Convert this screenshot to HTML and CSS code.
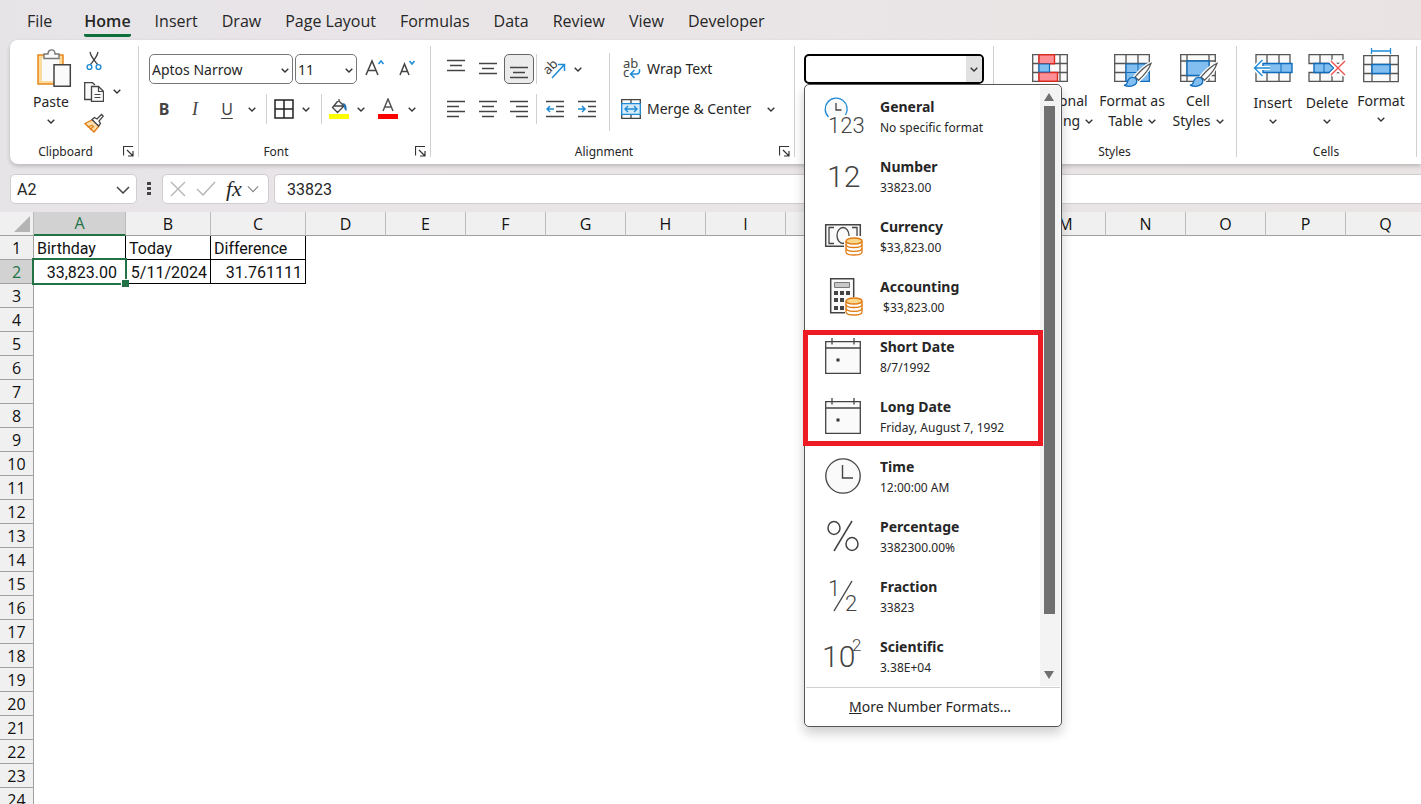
FILE: index.html
```html
<!DOCTYPE html>
<html lang="en">
<head>
<meta charset="utf-8">
<title>Workbook</title>
<link rel="stylesheet" href="styles.css">
</head>
<body>
<svg class="defs" aria-hidden="true">
  <symbol id="chev" viewBox="0 0 8 5"><path d="M.7.8 4 4 7.300.8" fill="none" stroke="#333" stroke-width="1.4"/></symbol>
  <symbol id="launch" viewBox="0 0 11 11"><path d="M.5 9.500V.5H10M4 4l5.500 5.500M10 5v5H5" fill="none" stroke="#333" stroke-width="1.200"/></symbol>
  <symbol id="coins" viewBox="0 0 18 19"><path d="M1 4v11c0 4 16 4 16 0V4" fill="#fff" stroke="#e07a10" stroke-width="1.300"/><path d="M1 7.500c0 4 16 4 16 0M1 11.300c0 4 16 4 16 0" fill="none" stroke="#e07a10" stroke-width="1.300"/><ellipse cx="9" cy="4" rx="8" ry="3" fill="#fbd78c" stroke="#e07a10" stroke-width="1.300"/></symbol>
  <symbol id="cal" viewBox="0 0 36 36"><path d="M.7 3.700h34.600v31.600H.7z" fill="#fafafa" stroke="#444" stroke-width="1.300"/><path d="M.7 10h34.600M7 0v6.500M29 0v6.500" stroke="#444" stroke-width="1.300"/><path d="M11.500 20.500h3v3h-3z" fill="#333"/></symbol>
  <symbol id="brush" viewBox="0 0 30 26"><path d="M29 1C22 4 16 11 12.500 15l3.500 3.500C21 14 27 7 29 1z" fill="#fafafa" stroke="#fff" stroke-width="4"/><path d="M29 1C22 4 16 11 12.500 15l3.500 3.500C21 14 27 7 29 1z" fill="#fafafa" stroke="#555" stroke-width="1.300"/><path d="M1 23.500c4 0 3-3 4.500-5.500 2-3.500 7.500-3 8.500 0 1.500 5-6 8.500-13 5.500z" fill="#83bef0" stroke="#0f6cbd" stroke-width="1.300"/></symbol>
</svg>

<header class="top">
<nav class="tabs" aria-label="Ribbon tabs">
  <button class="tab">File</button><button class="tab active">Home</button><button class="tab">Insert</button><button class="tab">Draw</button><button class="tab">Page Layout</button><button class="tab">Formulas</button><button class="tab">Data</button><button class="tab">Review</button><button class="tab">View</button><button class="tab">Developer</button>
</nav>

<section class="ribbon" aria-label="Home">
  <div class="group clipboard">
    <div class="body">
      <button class="paste">
        <svg width="36" height="40" viewBox="0 0 36 40"><path d="M2 7h25v29H2z" fill="#fbdb9b" stroke="#e8851c" stroke-width="1.500"/><path d="M6 10h17v23H6z" fill="#fafafa"/><path d="M8 10.500V6h4c0-5.500 7-5.500 7 0h4v4.500z" fill="#fafafa" stroke="#777" stroke-width="1.400"/><path d="M18 16.700h16.300v21.600H18z" fill="#fafafa" stroke="#444" stroke-width="1.500"/></svg>
        <span>Paste</span><svg class="chev"><use href="#chev"/></svg>
      </button>
      <div class="cliptools">
        <button aria-label="Cut"><svg width="20" height="20" viewBox="0 0 20 20"><path d="M6 1c1 5 4 8 7.500 12.500M14 1c-1 5-4 8-7.500 12.500" fill="none" stroke="#444" stroke-width="1.300"/><circle cx="5.500" cy="16" r="2.400" fill="none" stroke="#1e8bd6" stroke-width="1.400"/><circle cx="14.500" cy="16" r="2.400" fill="none" stroke="#1e8bd6" stroke-width="1.400"/></svg></button>
        <button aria-label="Copy"><svg width="20" height="20" viewBox="0 0 20 20"><path d="M7 17.500H.7V.7h7.800L11 3" fill="#fafafa" stroke="#444" stroke-width="1.300"/><path d="M7.500 4.500h7l5 5v9.800h-12z" fill="#fafafa" stroke="#444" stroke-width="1.300"/><path d="M14.500 4.500v5h5M10.500 12.500h6M10.500 15.500h6" fill="none" stroke="#444" stroke-width="1.200"/></svg><svg class="chev"><use href="#chev"/></svg></button>
        <button aria-label="Format Painter"><svg width="20" height="20" viewBox="0 0 20 20"><path d="M1 10.500 9 6.500l6 6.500-5 6z" fill="#fde0ac" stroke="#e07a10" stroke-width="1.300"/><path d="M3.500 14 9 12M6 16.500l4-3.500" stroke="#e07a10" stroke-width="1.200"/><path d="m8 6.500 2.500-2 2.500 1.500L17.500 1.500l1.700 1.700L15 8l1.500 2.500-2 2.500z" fill="#fff" stroke="#444" stroke-width="1.300"/></svg></button>
      </div>
    </div>
    <footer><span>Clipboard</span><button class="launcher" aria-label="Clipboard settings"><svg><use href="#launch"/></svg></button></footer>
  </div>

  <div class="group font">
    <div class="body rows">
      <div class="row">
        <label class="pick family"><select aria-label="Font"><option>Aptos Narrow</option></select><svg class="chev"><use href="#chev"/></svg></label>
        <label class="pick size"><select aria-label="Font size"><option>11</option></select><svg class="chev"><use href="#chev"/></svg></label>
        <button class="w32" aria-label="Increase font size"><svg width="20" height="20" viewBox="0 0 20 20"><path d="M1 16 7 2l6 14M3 11.500h8" fill="none" stroke="#444" stroke-width="1.500"/><path d="m13.500 5 2.500-3 2.500 3" fill="none" stroke="#1e8bd6" stroke-width="1.500"/></svg></button>
        <button class="w32" aria-label="Decrease font size"><svg width="20" height="20" viewBox="0 0 20 20"><path d="m3 16 4.500-11L12 16M4.500 12.500h6" fill="none" stroke="#444" stroke-width="1.500"/><path d="m12.500 2 2.500 3 2.500-3" fill="none" stroke="#1e8bd6" stroke-width="1.500"/></svg></button>
      </div>
      <div class="row">
        <button class="w30 glyph bold">B</button><button class="w32 glyph italic">I</button><button class="w32 glyph under">U</button><button class="w18" aria-label="Underline options"><svg class="chev"><use href="#chev"/></svg></button>
        <i class="sep"></i>
        <button class="w24" aria-label="Borders"><svg width="20" height="20" viewBox="0 0 20 20"><path d="M1 1h18v18H1zM10 1v18M1 10h18" fill="none" stroke="#222" stroke-width="1.500"/></svg></button><button class="w20" aria-label="Border options"><svg class="chev"><use href="#chev"/></svg></button>
        <i class="sep"></i>
        <button class="w24" aria-label="Fill color"><svg width="20" height="22" viewBox="0 0 20 22"><path d="M8.500 3.500 3.500 9.500l5 5L15 8 10 3zM10 3V1M15 8H5" fill="#fafafa" stroke="#444" stroke-width="1.300"/><path d="M13 5c4 0 5 3 4.500 8-2-.5-2.500-3-2.500-5z" fill="#1e73b8"/><path d="M0 16h20v5H0z" fill="#ff0"/></svg></button><button class="w20" aria-label="Fill options"><svg class="chev"><use href="#chev"/></svg></button>
        <button class="w34" aria-label="Font color"><svg width="20" height="22" viewBox="0 0 20 22"><path d="M5 13 10 1l5 12M7 9h6" fill="none" stroke="#555" stroke-width="1.500"/><path d="M0 16h20v5H0z" fill="red"/></svg></button><button class="w14" aria-label="Font color options"><svg class="chev"><use href="#chev"/></svg></button>
      </div>
    </div>
    <footer><span>Font</span><button class="launcher" aria-label="Font settings"><svg><use href="#launch"/></svg></button></footer>
  </div>

  <div class="group alignment">
    <div class="body">
      <div class="rows">
        <div class="row">
          <button class="w32" aria-label="Top align"><svg width="18" height="20"><path d="M0 1.500h18M3 6.500h12M0 11.500h18" class="ln"/></svg></button><button class="w32" aria-label="Middle align"><svg width="18" height="20"><path d="M0 4.500h18M3 9.500h12M0 14.500h18" class="ln"/></svg></button><button class="w30 on" aria-label="Bottom align" aria-pressed="true"><svg width="18" height="20"><path d="M0 8.500h18M3 13.500h12M0 18.500h18" class="ln"/></svg></button><i class="sep tight"></i>
          <button class="w32" aria-label="Orientation"><svg width="22" height="22" viewBox="0 0 22 22"><text x="0" y="14" transform="rotate(-45 6 11)" class="abc">ab</text><path d="M8 20 20 7M14 6.500h6.500V13" fill="none" stroke="#1e8bd6" stroke-width="1.500"/></svg></button><button class="w14" aria-label="Orientation options"><svg class="chev"><use href="#chev"/></svg></button>
        </div>
        <div class="row">
          <button class="w32" aria-label="Align left"><svg width="18" height="18"><path d="M0 1.500h18M0 6.500h12M0 11.500h18M0 16.500h12" class="ln"/></svg></button><button class="w32" aria-label="Center"><svg width="18" height="18"><path d="M0 1.500h18M3 6.500h12M0 11.500h18M3 16.500h12" class="ln"/></svg></button><button class="w30" aria-label="Align right"><svg width="18" height="18"><path d="M0 1.500h18M6 6.500h12M0 11.500h18M6 16.500h12" class="ln"/></svg></button><i class="sep tight"></i>
          <button class="w32" aria-label="Decrease indent"><svg width="18" height="18"><path d="M0 1.500h18M10 6.500h8M10 11.500h8M0 16.500h18" class="ln"/><path d="M8 9H1M4 6 1 9l3 3" fill="none" stroke="#1e8bd6" stroke-width="1.500"/></svg></button><button class="w32" aria-label="Increase indent"><svg width="18" height="18"><path d="M0 1.500h18M10 6.500h8M10 11.500h8M0 16.500h18" class="ln"/><path d="M0 9h7M4 6l3 3-3 3" fill="none" stroke="#1e8bd6" stroke-width="1.500"/></svg></button>
        </div>
      </div>
      <i class="sep tall"></i>
      <div class="rows wide">
        <div class="row"><button class="txt"><svg width="20" height="22" viewBox="0 0 20 22"><text x="2" y="10" class="abc">ab</text><text x="2" y="19" class="abc">c</text><path d="M18.500 11c.5 4-1 5-3 5H10M13.500 12l-4 4 4 4" fill="none" stroke="#1e8bd6" stroke-width="1.500"/></svg><span>Wrap Text</span></button></div>
        <div class="row"><button class="txt"><svg width="20" height="20" viewBox="0 0 20 20"><path d="M.7.7h18.600v18.600H.7zM10 .7V5M10 15v4" fill="#fafafa" stroke="#444" stroke-width="1.300"/><path d="M.7 4.700h18.600v10.600H.7z" fill="#d6ebfa" stroke="#1e8bd6" stroke-width="1.300"/><path d="M4 10h12M7 7l-3 3 3 3M13 7l3 3-3 3" fill="none" stroke="#1e8bd6" stroke-width="1.400"/></svg><span>Merge &amp; Center</span></button><button class="w40" aria-label="Merge options"><svg class="chev"><use href="#chev"/></svg></button></div>
      </div>
    </div>
    <footer><span>Alignment</span><button class="launcher" aria-label="Alignment settings"><svg><use href="#launch"/></svg></button></footer>
  </div>

  <div class="group number">
    <div class="combo">
      <input aria-label="Number format" type="text"><button aria-label="Open number formats"><svg class="chev"><use href="#chev"/></svg></button>
      <div class="menu">
        <div class="scroller">
          <div class="items">
            <button class="item"><svg viewBox="0 0 36 36"><path d="M3.500 19A11 11 0 1 1 20.500 17" fill="#fafafa" stroke="#1e8bd6" stroke-width="1.300"/><path d="M11 5v7h5.500" fill="none" stroke="#444" stroke-width="1.300"/><text x="3" y="35" class="num s22">123</text></svg><span><b>General</b><small>No specific format</small></span></button>
            <button class="item"><svg viewBox="0 0 36 36"><text x="2" y="29" class="num s30">12</text></svg><span><b>Number</b><small>33823.00</small></span></button>
            <button class="item"><svg viewBox="0 0 36 36"><path d="M.7 6.700h34.600v21.600H.7z" fill="#fafafa" stroke="#444" stroke-width="1.500"/><path d="M9 9.500H4v16h5M27 9.500h5v16h-5" fill="none" stroke="#444" stroke-width="1.300"/><ellipse cx="18" cy="17.500" rx="6" ry="8" fill="#fafafa" stroke="#444" stroke-width="1.300"/><path d="M19 18h19v19H19z" fill="#fff"/><use href="#coins" x="20" y="19" width="18" height="19"/></svg><span><b>Currency</b><small>$33,823.00</small></span></button>
            <button class="item"><svg viewBox="0 0 36 36"><path d="M5.700.7h23v34h-23z" fill="#fafafa" stroke="#444" stroke-width="1.500"/><path d="M9.500 4.500h15v5h-15z" fill="#c8c8c8" stroke="#777"/><path d="M9 13h4v4H9zM15 13h4v4h-4zM21 13h4v4h-4zM9 20h4v4H9zM15 20h4v4h-4zM9 28h4v4H9zM15 28h4v4h-4z" fill="#444"/><path d="M20 19h18v18H20z" fill="#fff"/><use href="#coins" x="20" y="19" width="18" height="19"/></svg><span><b>Accounting</b><small>&nbsp;$33,823.00</small></span></button>
            <div class="dates">
              <button class="item"><svg><use href="#cal"/></svg><span><b>Short Date</b><small>8/7/1992</small></span></button>
              <button class="item"><svg><use href="#cal"/></svg><span><b>Long Date</b><small>Friday, August 7, 1992</small></span></button>
            </div>
            <button class="item"><svg viewBox="0 0 36 36"><circle cx="18" cy="18" r="17.200" fill="#fafafa" stroke="#444" stroke-width="1.300"/><path d="M17.500 7v13H28" fill="none" stroke="#444" stroke-width="1.400"/></svg><span><b>Time</b><small>12:00:00 AM</small></span></button>
            <button class="item"><svg viewBox="0 0 36 36"><path d="M27 3 9 33" stroke="#444" stroke-width="1.500"/><ellipse cx="9" cy="10" rx="6" ry="6.500" fill="none" stroke="#444" stroke-width="1.500"/><ellipse cx="27" cy="26" rx="6" ry="6.500" fill="none" stroke="#444" stroke-width="1.500"/></svg><span><b>Percentage</b><small>3382300.00%</small></span></button>
            <button class="item"><svg viewBox="0 0 36 36"><text x="3" y="18" class="num s22">1</text><path d="M27 3 9 33" stroke="#444" stroke-width="1.400"/><text x="20" y="33" class="num s22">2</text></svg><span><b>Fraction</b><small>33823</small></span></button>
            <button class="item"><svg viewBox="0 0 36 36"><text x="-3" y="29" class="num s30">10</text><text x="27" y="13" class="num s17">2</text></svg><span><b>Scientific</b><small>3.38E+04</small></span></button>
          </div>
          <div class="bar"><svg width="12" height="10"><path d="m6 1 5 8H1z"/></svg><div class="thumb"></div><svg width="12" height="10"><path d="M6 9 1 1h10z"/></svg></div>
        </div>
        <button class="more"><span><u>M</u>ore Number Formats...</span></button>
      </div>
    </div>
  </div>

  <div class="group styles">
    <div class="body">
      <button class="big cond"><svg width="36" height="34" viewBox="0 0 36 34"><path d="M.7 3.700h34.600v26.600H.7zM.7 12.500h34.600M.7 21.500h34.600M7 4v26M28 4v26" fill="#fafafa" stroke="#555" stroke-width="1.300"/><path d="M7 3.700h15.500v9H7zM7 21.500h18.500v8.800H7z" fill="#ff8f94" stroke="#d92b20" stroke-width="1.400"/><path d="M7 13h10.500v8H7z" fill="#83bef0" stroke="#0f6cbd" stroke-width="1.200"/></svg><span>Conditional</span><span>Formatting <svg class="chev"><use href="#chev"/></svg></span></button>
      <button class="big astable"><svg width="36" height="34" viewBox="0 0 36 34"><path d="M.7 3.700h34.600v26.600H.7zM.7 12.500h34.600M.7 21.500h34.600M12 4v26M24 4v26" fill="#fafafa" stroke="#555" stroke-width="1.300"/><path d="M12 13h23.300v17.300H12z" fill="#83bef0" stroke="#0f6cbd" stroke-width="1.200"/><path d="M12 21.500h23M24 13v17" stroke="#0f6cbd"/><use href="#brush" x="9" y="11" width="29" height="26"/></svg><span>Format as</span><span>Table <svg class="chev"><use href="#chev"/></svg></span></button>
      <button class="big cellst"><svg width="36" height="34" viewBox="0 0 36 34"><path d="M.7 3.700h34.600v26.600H.7zM.7 10h34.600M7 4v26M29 4v26M.7 24.500h34.600" fill="#fafafa" stroke="#555" stroke-width="1.300"/><path d="M7 10h22v14.500H7z" fill="#83bef0" stroke="#0f6cbd" stroke-width="1.300"/><use href="#brush" x="9" y="11" width="29" height="26"/></svg><span>Cell</span><span>Styles <svg class="chev"><use href="#chev"/></svg></span></button>
    </div>
    <footer><span>Styles</span></footer>
  </div>

  <div class="group cells">
    <div class="body">
      <button class="big"><svg width="40" height="34" viewBox="0 0 40 34"><path d="M3 3.700h34v26.600H3zM14 4v26M26 4v26" fill="#fafafa" stroke="#555" stroke-width="1.300"/><path d="M10 12.500h29v9H10z" fill="#83bef0" stroke="#0f6cbd" stroke-width="1.400"/><path d="M28 13v8" stroke="#0f6cbd"/><path d="M17 17H1M9.500 8.500 1 17l8.500 8.500" fill="none" stroke="#fff" stroke-width="4"/><path d="M17 17H1.500M9.500 9 1.500 17l8 8" fill="none" stroke="#1e8bd6" stroke-width="1.400"/></svg><span>Insert</span><svg class="chev"><use href="#chev"/></svg></button>
      <button class="big"><svg width="38" height="34" viewBox="0 0 38 34"><path d="M1 3.700h34v8.800H1zM1 21.500h34v8.800H1zM12 4v8M24 4v8M12 22v8M24 22v8" fill="#fafafa" stroke="#555" stroke-width="1.300"/><path d="M6 12.500h15l5 4.500-5 4.500H6z" fill="#83bef0" stroke="#0f6cbd" stroke-width="1.400"/><path d="M16 13v8" stroke="#0f6cbd"/><path d="m23 10 14 14M37 10 23 24" stroke="#fff" stroke-width="5"/><path d="m23 10 14 14M37 10 23 24" stroke="#f0504e" stroke-width="1.400"/></svg><span>Delete</span><svg class="chev"><use href="#chev"/></svg></button>
      <button class="big"><svg class="fmt" width="36" height="36" viewBox="0 0 36 36"><path d="M.7 8.700h34.600v26H.7zM.7 17.500h34.600M.7 26.500h34.600M9 9v26M27 9v26" fill="#fafafa" stroke="#555" stroke-width="1.300"/><path d="M9 17.500h18v9H9z" fill="#83bef0" stroke="#0f6cbd" stroke-width="1.400"/><path d="M8 4h20M8.500 1v6M27.500 1v6" stroke="#1e8bd6" stroke-width="1.300"/></svg><span>Format</span><svg class="chev"><use href="#chev"/></svg></button>
    </div>
    <footer><span>Cells</span></footer>
  </div>
  <div class="group rest"></div>
</section>

<div class="formula">
  <label class="namebox"><input type="text" value="A2" aria-label="Name box"><svg width="14" height="8" viewBox="0 0 14 8"><path d="m1 1 6 6 6-6" fill="none" stroke="#444" stroke-width="1.500"/></svg></label>
  <svg class="dots" width="4" height="14"><path d="M0 0h4v3H0zM0 5h4v3H0zM0 10h4v3H0z" fill="#444"/></svg>
  <div class="fx">
    <button aria-label="Cancel"><svg width="16" height="16"><path d="m1 1 14 14M15 1 1 15" stroke="#b5b5b5" stroke-width="1.400"/></svg></button>
    <button aria-label="Enter"><svg width="20" height="16"><path d="m1 8 6 6L19 1" fill="none" stroke="#b5b5b5" stroke-width="1.400"/></svg></button>
    <button class="fn" aria-label="Insert function">fx</button>
    <button aria-label="Function options"><svg width="12" height="8" viewBox="0 0 14 8"><path d="m1 1 6 6 6-6" fill="none" stroke="#888" stroke-width="1.400"/></svg></button>
  </div>
  <input class="entry" type="text" value="33823" aria-label="Formula bar">
</div>
</header>

<main class="sheet">
<table>
  <colgroup><col class="ch"><col class="ca"><col class="cb"><col class="cc"><col span="14" class="cd"></colgroup>
  <thead><tr><th class="corner"><svg width="16" height="16"><path d="M16 0v16H0z" fill="#b4b4b4"/></svg></th><th class="sel">A</th><th>B</th><th>C</th><th>D</th><th>E</th><th>F</th><th>G</th><th>H</th><th>I</th><th>J</th><th>K</th><th>L</th><th>M</th><th>N</th><th>O</th><th>P</th><th>Q</th></tr></thead>
  <tbody>
    <tr><th>1</th><td class="cell">Birthday</td><td class="cell">Today</td><td class="cell">Difference</td></tr>
    <tr><th class="sel">2</th><td class="cell value current">33,823.00</td><td class="cell value">5/11/2024</td><td class="cell value">31.761111</td></tr>
    <tr><th>3</th></tr><tr><th>4</th></tr><tr><th>5</th></tr><tr><th>6</th></tr><tr><th>7</th></tr><tr><th>8</th></tr><tr><th>9</th></tr><tr><th>10</th></tr><tr><th>11</th></tr><tr><th>12</th></tr><tr><th>13</th></tr><tr><th>14</th></tr><tr><th>15</th></tr><tr><th>16</th></tr><tr><th>17</th></tr><tr><th>18</th></tr><tr><th>19</th></tr><tr><th>20</th></tr><tr><th>21</th></tr><tr><th>22</th></tr><tr><th>23</th></tr><tr><th>24</th></tr>
  </tbody>
</table>
</main>
</body>
</html>
```
FILE: styles.css
```css
* { box-sizing: border-box; }
body { margin: 0; height: 100vh; overflow: hidden; background: #fff; color: #262626; font: 14px/20px "Noto Sans", "Open Sans", sans-serif; }
button, input, select { margin: 0; padding: 0; border: 0; background: none; color: inherit; font: inherit; }
button { display: flex; align-items: center; justify-content: center; white-space: nowrap; }
svg { display: block; flex: none; }
.defs { position: absolute; width: 0; height: 0; }
.chev { width: 8px; height: 5px; }

.top { background: linear-gradient(90deg, #e7e4e8, #eae5e6 60%, #e9e3e3); }
.tabs { display: flex; gap: 24px; height: 40px; padding: 2px 27px 0; }
.tab { height: 35px; padding-top: 5px; border-bottom: 3px solid transparent; font-size: 16px; font-family: "Open Sans", sans-serif; }
.tab.active { margin-left: 8px; border-radius: 2px; border-bottom-color: #0f703b; font-weight: 600; }

.ribbon { display: flex; height: 124px; margin-left: 10px; background: #fff; border-radius: 8px 0 0 8px; box-shadow: 0 2px 4px #0003; }
.group { position: relative; display: flex; flex: none; flex-direction: column; justify-content: space-between; padding: 8px 0 2px; }
.group:not(.rest)::after { content: ""; position: absolute; top: 6px; bottom: 7px; right: 0; width: 1px; background: #d0d0d0; }
.clipboard { width: 129px; }
.font { width: 292px; }
.alignment { width: 364px; }
.number { width: 199px; padding-left: 9px; }
.styles { width: 243px; }
.cells { width: 180px; }
.rest { flex: 1; }
.body { display: flex; }
.group footer { display: flex; justify-content: center; align-items: center; position: relative; height: 20px; font-size: 12px; padding-right: 18px; }
.styles footer, .cells footer { padding-right: 2px; }
.launcher { position: absolute; right: 5px; bottom: 5px; }
.launcher svg { width: 11px; height: 11px; }
.sep { width: 1px; height: 30px; margin: 0 5px; background: #d0d0d0; }
.sep.tight { margin: 0 2px; }
.sep.tall { height: 78px; margin: 5px 8px 0 6px; }
.rows { display: flex; flex-direction: column; gap: 10px; padding: 6px 0 0 9px; }
.row { display: flex; height: 30px; align-items: center; }
.row button { height: 30px; }
.w40 { width: 40px; }
.w34 { width: 34px; }
.w32 { width: 32px; }
.w30 { width: 30px; }
.w24 { width: 24px; }
.w20 { width: 20px; }
.w18 { width: 18px; }
.w14 { width: 14px; }
.ln { stroke: #444; stroke-width: 1.5px; }
.abc { font: 13px "Noto Sans", sans-serif; fill: #444; }

.paste { flex-direction: column; width: 54px; margin-left: 14px; }
.paste > svg:first-child { margin-left: 6px; }
.paste > span { margin-top: 2px; line-height: 24px; }
.paste .chev { margin-top: 5px; }
.cliptools { display: flex; flex-direction: column; gap: 10px; padding: 2px 0 0 6px; }
.cliptools button { justify-content: flex-start; gap: 9px; height: 21px; }
.clipboard .body { height: 86px; align-items: flex-start; }

.pick { position: relative; height: 30px; margin-right: 2px; border: 1px solid #777; border-radius: 5px; }
.pick select { width: 100%; height: 28px; padding: 1px 0 0 2px; appearance: none; }
.pick .chev { position: absolute; right: 3px; top: 13px; }
.family { width: 144px; }
.size { width: 62px; }
.glyph { font-size: 16px; color: #444; }
.bold { font-weight: 700; }
.italic { font-style: italic; font-family: "Liberation Serif", serif; font-size: 18px; }
.under { text-decoration: underline; text-underline-offset: 3px; }
.font .rows, .font .body { padding-left: 10px; }
.on { border: 1px solid #666; border-radius: 5px; background: #ebebeb; }
.rows.wide { padding-left: 3px; }
.txt { gap: 6px; }

.combo { position: relative; display: flex; width: 180px; height: 30px; margin-top: 6px; border: 2px solid #000; border-radius: 5px; }
.combo > input { flex: 1; min-width: 0; padding-left: 4px; outline: 0; }
.combo > button { width: 16px; background: #e1e1e1; border-radius: 0 3px 3px 0; }
.menu { position: absolute; z-index: 2; top: 28px; left: -2px; width: 258px; padding: 1px; border: 1px solid #555; border-radius: 5px; background: #fff; box-shadow: 0 6px 12px #0003; }
.scroller { display: flex; padding-bottom: 1px; border-bottom: 1px solid #d0d0d0; }
.items { flex: 1; }
.item { justify-content: flex-start; gap: 19px; width: 100%; height: 60px; padding-left: 19px; text-align: left; }
.item svg { width: 36px; height: 36px; overflow: visible; }
.item span { display: flex; flex-direction: column; padding-top: 2px; }
.item b { font-size: 14px; font-weight: 700; line-height: 22px; }
.item small { font-size: 12px; line-height: 20px; }
.num { font-family: Roboto, sans-serif; font-weight: 300; fill: #444; }
.s30 { font-size: 30px; }
.s22 { font-size: 22px; }
.s17 { font-size: 17px; }
.dates { position: relative; }
.dates::after { content: ""; position: absolute; inset: 4px -3px 0 -3px; border: 5px solid #ed1c24; pointer-events: none; }
.bar { display: flex; flex-direction: column; align-items: center; justify-content: space-between; width: 20px; padding: 6px 2px 6px 0; background: #f3f3f3; }
.bar svg { fill: #707070; }
.thumb { width: 11px; flex: 1; margin: 4px 0 56px; background: #707070; }
.more { width: 100%; height: 37px; padding-right: 6px; }

.big { flex-direction: column; justify-content: flex-start; padding-top: 3px; }
.big > svg:first-child { margin-bottom: 6px; overflow: visible; }
.big > span { display: flex; align-items: center; gap: 5px; line-height: 20px; }
.big > .chev { margin-top: 6px; }
.cond { width: 80px; }
.astable { width: 84px; }
.cellst { width: 48px; }
.styles .body { padding-left: 16px; }
.cells .body { padding-left: 9px; }
.cells .big { width: 54px; }
.cells .big > svg:first-child { margin-bottom: 8px; }
.cells .big > .fmt { margin: -4px 0 7px; }

.formula { display: flex; align-items: center; padding: 10px 0 8px 10px; }
.namebox, .fx, .entry { height: 30px; background: #fff; border: 1px solid #d0cdd0; border-radius: 5px; }
.namebox { display: flex; align-items: center; width: 127px; padding: 1px 6px 0; }
.namebox input { flex: 1; min-width: 0; font-family: Roboto, sans-serif; font-size: 16px; }
.dots { margin: 0 11px 0 10px; }
.fx { display: flex; align-items: center; gap: 10px; width: 107px; padding: 0 1px 0 7px; }
.fn { font: italic 22px "Liberation Serif", serif; }
.fx button:last-child { margin-left: -5px; }
.entry { flex: 1; min-width: 0; margin-left: 5px; padding: 1px 0 0 12px; border-right: 0; border-radius: 5px 0 0 5px; font-family: Roboto, sans-serif; font-size: 16px; }

.sheet { overflow: hidden; }
table { width: 1426px; table-layout: fixed; border-collapse: separate; border-spacing: 0; font: 16px/20px Roboto, sans-serif; color: #111; }
.ch { width: 34px; }
.ca { width: 92px; }
.cb { width: 85px; }
.cc { width: 95px; }
.cd { width: 80px; }
th { height: 24px; padding: 0; border-right: 1px solid #a0a0a0; border-bottom: 1px solid #a0a0a0; background: #f0f0f0; font: 16px/20px "Open Sans", sans-serif; }
thead th { border-right-color: #bbb; }
.corner svg { margin-left: 14px; }
th.sel { background: #d2d2d2; color: #217346; }
thead .sel { border-bottom: 2px solid #217346; }
.cell { height: 24px; padding: 2px 3px 0; border-right: 1px solid #000; border-bottom: 1px solid #000; }
.value { text-align: right; }
.current { position: relative; padding-right: 8px; }
.current::before { content: ""; position: absolute; inset: -2px; border: 2px solid #217346; }
.current::after { content: ""; position: absolute; right: -4px; bottom: -4px; width: 7px; height: 7px; background: #217346; border: solid #fff; border-width: 1px 0 0 1px; }
```
